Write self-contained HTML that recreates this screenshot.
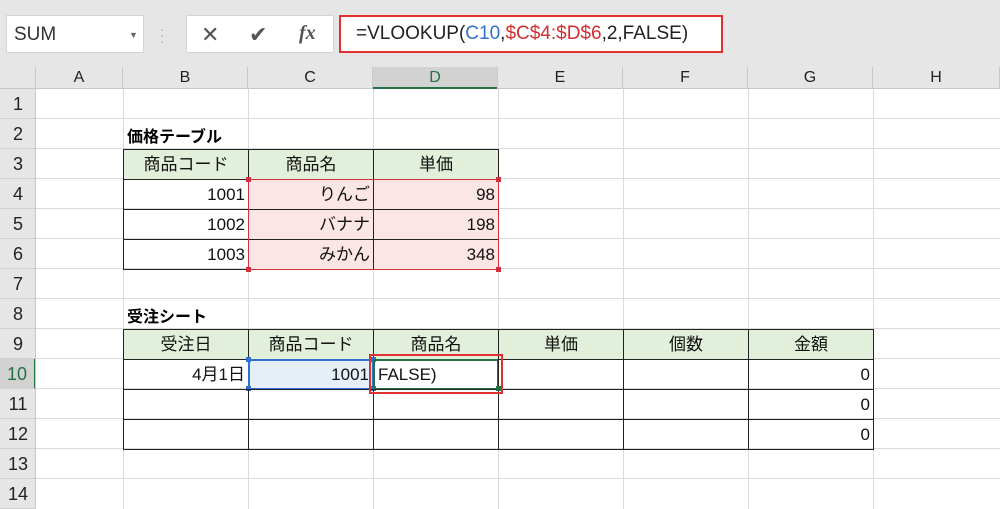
<!DOCTYPE html><html><head><meta charset="utf-8"><style>
*{margin:0;padding:0;box-sizing:border-box}
body{width:1000px;height:509px;overflow:hidden;background:#fff;font-family:"Liberation Sans","Noto Sans CJK JP",sans-serif;position:relative}
.a{position:absolute}
.ch{position:absolute;top:67px;height:22px;font-size:16px;text-align:center;line-height:22px;color:#222;border-right:1px solid #c8c8c8}
.rh{position:absolute;left:0;width:36px;height:30px;font-size:18px;text-align:center;line-height:30px;color:#222;border-bottom:1px solid #d0d0d0;background:#e6e6e6}
.c{position:absolute;height:31px;border:1px solid #222;font-size:17px;line-height:29px;padding:0 3px;color:#111}
.g{background:#e2efda;text-align:center}
.r{text-align:right}
.p{background:#fbe5e5}
.t{position:absolute;font-size:16px;font-weight:bold}
.hd{position:absolute;width:5px;height:5px}
</style></head><body>
<div class="a" style="left:0;top:0;width:1000px;height:67px;background:#e6e6e6"></div>
<div class="a" style="left:6px;top:15px;width:138px;height:38px;background:#fff;border:1px solid #d4d4d4;font-size:19px;line-height:38px;padding-left:7px;color:#333">SUM<span class="a" style="left:122px;top:0;font-size:9px;color:#666">▼</span></div>
<div class="a" style="left:160px;top:26px;color:#aaa;font-size:14px;line-height:6px">·<br>·<br>·</div>
<div class="a" style="left:186px;top:15px;width:148px;height:38px;background:#fff;border:1px solid #d4d4d4"></div>
<div class="a" style="left:201px;top:22px;font-size:22px;color:#555">✕</div>
<div class="a" style="left:249px;top:22px;font-size:22px;color:#555">✔</div>
<div class="a" style="left:299px;top:22px;font-size:20px;color:#555;font-family:'Liberation Serif',serif;font-style:italic;font-weight:bold">fx</div>
<div class="a" style="left:339px;top:15px;width:384px;height:38px;background:#fff;border:2px solid #e03030;font-size:19px;line-height:34px;padding-left:15px;color:#222;white-space:nowrap">=VLOOKUP(<span style="color:#3070d0">C10</span>,<span style="color:#d03030">$C$4:$D$6</span>,2,FALSE)</div>
<div class="a" style="left:0;top:67px;width:1000px;height:22px;background:#e6e6e6;border-bottom:1px solid #c8c8c8"></div>
<div class="a" style="left:373px;top:67px;width:125px;height:22px;background:#d2d2d2;border-bottom:2px solid #217346"></div>
<div class="ch" style="left:0;width:36px"></div>
<div class="ch" style="left:36px;width:87px">A</div>
<div class="ch" style="left:123px;width:125px">B</div>
<div class="ch" style="left:248px;width:125px">C</div>
<div class="ch" style="left:373px;width:125px;color:#217346">D</div>
<div class="ch" style="left:498px;width:125px">E</div>
<div class="ch" style="left:623px;width:125px">F</div>
<div class="ch" style="left:748px;width:125px">G</div>
<div class="ch" style="left:873px;width:127px">H</div>
<svg class="a" style="left:0;top:89px" width="1000" height="420">
<g stroke="#dadada" stroke-width="1">
<line x1="123.5" y1="0" x2="123.5" y2="420"/><line x1="248.5" y1="0" x2="248.5" y2="420"/><line x1="373.5" y1="0" x2="373.5" y2="420"/><line x1="498.5" y1="0" x2="498.5" y2="420"/><line x1="623.5" y1="0" x2="623.5" y2="420"/><line x1="748.5" y1="0" x2="748.5" y2="420"/><line x1="873.5" y1="0" x2="873.5" y2="420"/>
<line x1="36" y1="29.5" x2="1000" y2="29.5"/><line x1="36" y1="59.5" x2="1000" y2="59.5"/><line x1="36" y1="89.5" x2="1000" y2="89.5"/><line x1="36" y1="119.5" x2="1000" y2="119.5"/><line x1="36" y1="149.5" x2="1000" y2="149.5"/><line x1="36" y1="179.5" x2="1000" y2="179.5"/><line x1="36" y1="209.5" x2="1000" y2="209.5"/><line x1="36" y1="239.5" x2="1000" y2="239.5"/><line x1="36" y1="269.5" x2="1000" y2="269.5"/><line x1="36" y1="299.5" x2="1000" y2="299.5"/><line x1="36" y1="329.5" x2="1000" y2="329.5"/><line x1="36" y1="359.5" x2="1000" y2="359.5"/><line x1="36" y1="389.5" x2="1000" y2="389.5"/>
</g></svg>
<div class="rh" style="top:89px">1</div><div class="rh" style="top:119px">2</div><div class="rh" style="top:149px">3</div><div class="rh" style="top:179px">4</div><div class="rh" style="top:209px">5</div><div class="rh" style="top:239px">6</div><div class="rh" style="top:269px">7</div><div class="rh" style="top:299px">8</div><div class="rh" style="top:329px">9</div><div class="rh" style="top:359px;background:#d2d2d2;color:#217346;border-right:2px solid #217346">10</div><div class="rh" style="top:389px">11</div><div class="rh" style="top:419px">12</div><div class="rh" style="top:449px">13</div><div class="rh" style="top:479px">14</div>
<div class="a" style="left:35px;top:89px;width:1px;height:420px;background:#c8c8c8"></div>
<div class="t" style="left:127px;top:123px">価格テーブル</div>
<div class="c g" style="left:123px;top:149px;width:126px">商品コード</div>
<div class="c g" style="left:248px;top:149px;width:126px">商品名</div>
<div class="c g" style="left:373px;top:149px;width:126px">単価</div>
<div class="c r" style="left:123px;top:179px;width:126px">1001</div>
<div class="c r p" style="left:248px;top:179px;width:126px">りんご</div>
<div class="c r p" style="left:373px;top:179px;width:126px">98</div>
<div class="c r" style="left:123px;top:209px;width:126px">1002</div>
<div class="c r p" style="left:248px;top:209px;width:126px">バナナ</div>
<div class="c r p" style="left:373px;top:209px;width:126px">198</div>
<div class="c r" style="left:123px;top:239px;width:126px">1003</div>
<div class="c r p" style="left:248px;top:239px;width:126px">みかん</div>
<div class="c r p" style="left:373px;top:239px;width:126px">348</div>
<div class="a" style="left:248px;top:179px;width:251px;height:91px;border:1px solid #d03040"></div>
<div class="hd" style="left:246px;top:177px;background:#d03040"></div><div class="hd" style="left:496px;top:177px;background:#d03040"></div><div class="hd" style="left:246px;top:267px;background:#d03040"></div><div class="hd" style="left:496px;top:267px;background:#d03040"></div>
<div class="t" style="left:127px;top:303px">受注シート</div>
<div class="c g" style="left:123px;top:329px;width:126px">受注日</div>
<div class="c g" style="left:248px;top:329px;width:126px">商品コード</div>
<div class="c g" style="left:373px;top:329px;width:126px">商品名</div>
<div class="c g" style="left:498px;top:329px;width:126px">単価</div>
<div class="c g" style="left:623px;top:329px;width:126px">個数</div>
<div class="c g" style="left:748px;top:329px;width:126px">金額</div>
<div class="c r" style="left:123px;top:359px;width:126px">4月1日</div>
<div class="c r" style="left:248px;top:359px;width:126px;background:#e6eef8;border:2px solid #3070d0;line-height:27px">1001</div>
<div class="hd" style="left:246px;top:357px;background:#3070d0"></div><div class="hd" style="left:371px;top:357px;background:#3070d0"></div><div class="hd" style="left:246px;top:386px;background:#3070d0"></div><div class="hd" style="left:371px;top:386px;background:#3070d0"></div>
<div class="c" style="left:373px;top:359px;width:126px;border:2px solid #217346;line-height:27px">FALSE)</div>
<div class="c" style="left:498px;top:359px;width:126px"></div>
<div class="c" style="left:623px;top:359px;width:126px"></div>
<div class="c r" style="left:748px;top:359px;width:126px">0</div>
<div class="c" style="left:123px;top:389px;width:126px"></div><div class="c" style="left:248px;top:389px;width:126px"></div><div class="c" style="left:373px;top:389px;width:126px"></div><div class="c" style="left:498px;top:389px;width:126px"></div><div class="c" style="left:623px;top:389px;width:126px"></div><div class="c r" style="left:748px;top:389px;width:126px">0</div>
<div class="c" style="left:123px;top:419px;width:126px"></div><div class="c" style="left:248px;top:419px;width:126px"></div><div class="c" style="left:373px;top:419px;width:126px"></div><div class="c" style="left:498px;top:419px;width:126px"></div><div class="c" style="left:623px;top:419px;width:126px"></div><div class="c r" style="left:748px;top:419px;width:126px">0</div>
<div class="a" style="left:369px;top:354px;width:134px;height:40px;border:2px solid #e03030"></div>
<div class="a" style="left:496px;top:386px;width:5px;height:5px;background:#217346"></div>
</body></html>
